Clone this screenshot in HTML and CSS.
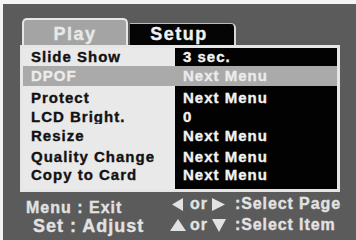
FILE: index.html
```html
<!DOCTYPE html>
<html>
<head>
<meta charset="utf-8">
<link rel="stylesheet" href="styles.css">
</head>
<body>
<div class="screen">
  <div class="tabs">
    <div class="tab tab-play">Play</div>
    <div class="tab tab-setup">Setup</div>
  </div>
  <div class="panel">
    <div class="row r1"><div class="name">Slide Show</div><div class="value">3 sec.</div></div>
    <div class="row r2 hl"><div class="name">DPOF</div><div class="value">Next Menu</div></div>
    <div class="row r3"><div class="name">Protect</div><div class="value">Next Menu</div></div>
    <div class="row r4"><div class="name">LCD Bright.</div><div class="value">0</div></div>
    <div class="row r5"><div class="name">Resize</div><div class="value">Next Menu</div></div>
    <div class="row r6"><div class="name">Quality Change</div><div class="value">Next Menu</div></div>
    <div class="row r7"><div class="name">Copy to Card</div><div class="value">Next Menu</div></div>
    <div class="panel-pad"><div class="name"></div><div class="value"></div></div>
  </div>
  <div class="footer">
    <div class="keys">
      <div class="key k1">Menu : Exit</div>
      <div class="key k2">Set : Adjust</div>
    </div>
    <div class="nav">
      <div class="navrow n1">
        <span class="arr a-left"><svg width="11" height="13" viewBox="0 0 11 13"><polygon points="11,0 11,13 0,6.5" fill="#e2e2e2"/></svg></span>
        <span class="or">or</span>
        <span class="arr a-right"><svg width="13" height="13" viewBox="0 0 13 13"><polygon points="0,0 13,6.5 0,13" fill="#e2e2e2"/></svg></span>
        <span class="label">:Select Page</span>
      </div>
      <div class="navrow n2">
        <span class="arr a-up"><svg width="16" height="12" viewBox="0 0 16 12"><polygon points="8,0 16,12 0,12" fill="#e2e2e2"/></svg></span>
        <span class="or">or</span>
        <span class="arr a-down"><svg width="14" height="13" viewBox="0 0 14 13"><polygon points="0,0 14,0 7,13" fill="#e2e2e2"/></svg></span>
        <span class="label">:Select Item</span>
      </div>
    </div>
  </div>
</div>
</body>
</html>
```
FILE: styles.css
```css
html, body {
  margin: 0;
  padding: 0;
  background: #f4f4f4;
}
body {
  width: 356px;
  height: 240px;
  overflow: hidden;
  font-family: "Liberation Sans", Arial, sans-serif;
  font-weight: bold;
}
.screen {
  margin: 4px 0 0 3px;
  width: 353px;
  height: 236px;
  background: #5b5b5b;
  box-sizing: border-box;
  padding: 14px 0 0 17px;
  -webkit-text-stroke: 0.35px currentColor;
}
.tabs {
  display: flex;
  align-items: flex-end;
  height: 27px;
  padding-left: 2px;
}
.tab {
  box-sizing: border-box;
  text-align: center;
  font-size: 18px;
  letter-spacing: 1.5px;
}
.tab-play {
  width: 106px;
  height: 27px;
  background: #a4a4a4;
  color: #e8e8e8;
  border: 2px solid #e6e6e6;
  border-bottom: none;
  border-radius: 5px 5px 0 0;
  line-height: 21px;
  padding-top: 4px;
}
.tab-setup {
  width: 106px;
  height: 22px;
  margin-left: 2px;
  background: #050505;
  color: #f0f0f0;
  border-top: 1px solid #bdbdbd;
  border-right: 2px solid #d8d8d8;
  border-radius: 0 5px 0 0;
  line-height: 21px;
  padding-right: 6px;
}
.panel {
  width: 320px;
  box-sizing: border-box;
  border: 3px solid #e6e6e6;
  display: flex;
  flex-direction: column;
}
.row, .panel-pad {
  display: flex;
  font-size: 15px;
  letter-spacing: 1px;
}
.name {
  width: 152px;
  background: #e9e9e9;
  color: #121212;
  padding-left: 8px;
  box-sizing: border-box;
  white-space: nowrap;
}
.value {
  flex: 1;
  background: #020202;
  color: #f2f2f2;
  padding-left: 8px;
  white-space: nowrap;
}
.hl .name, .hl .value {
  background: #aaaaaa;
  color: #ececec;
}
.r1 { height: 18px; line-height: 18px; }
.r2 { height: 20px; line-height: 20px; }
.r3 { height: 24px; line-height: 24px; }
.r4 { height: 14px; line-height: 14px; }
.r5 { height: 24px; line-height: 24px; }
.r6 { height: 18px; line-height: 18px; }
.r7 { height: 18px; line-height: 18px; }
.panel-pad { height: 5px; }
.footer {
  display: flex;
  color: #e2e2e2;
}
.keys {
  width: 144px;
  padding-left: 6px;
  letter-spacing: 1px;
}
.key { white-space: nowrap; }
.k1 {
  font-size: 16px;
  line-height: 18px;
  margin-top: 7px;
}
.k2 {
  font-size: 18px;
  line-height: 18px;
  padding-left: 7px;
}
.nav {
  display: flex;
  flex-direction: column;
  gap: 3px;
  margin-top: 3px;
}
.navrow {
  display: grid;
  grid-template-columns: 19px 22px 24px auto;
  align-items: center;
  height: 18px;
  font-size: 16px;
  letter-spacing: 0.9px;
  white-space: nowrap;
}
.arr {
  display: flex;
  align-items: center;
}
.arr svg { display: block; }
.a-left { padding-left: 2px; }
.a-up { padding-left: 0; }
.a-right, .a-down { padding-left: 1px; }
.or { padding-left: 1px; }
```
